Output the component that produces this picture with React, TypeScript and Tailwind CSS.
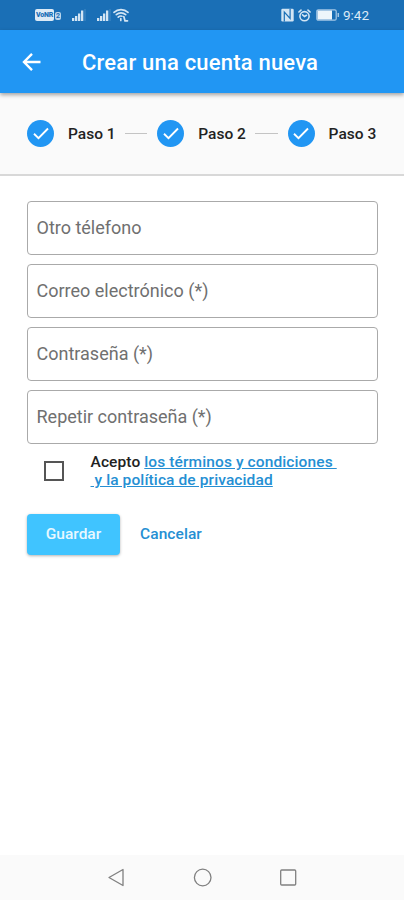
import { Fragment } from 'react'

const STEPS = ['Paso 1', 'Paso 2', 'Paso 3']
const FIELDS = ['Otro télefono', 'Correo electrónico (*)', 'Contraseña (*)', 'Repetir contraseña (*)']

function SignalIcon() {
  return (
    <svg width="16" height="14" viewBox="0 0 16 14" fill="#d3e5f4">
      <rect x="1" y="10" width="2.300" height="3" />
      <rect x="4" y="8" width="2.300" height="5" />
      <rect x="7" y="5.500" width="2.300" height="7.500" />
      <rect x="10" y="2.500" width="2.300" height="10.500" />
      <rect x="13.500" y="1" width="1" height="12" opacity="0.250" />
    </svg>
  )
}

function WifiIcon() {
  return (
    <svg width="16" height="14" viewBox="0 0 16 14" fill="none" stroke="#d3e5f4" strokeWidth="1.700" strokeLinecap="round">
      <path d="M1 4.300C4.800.6 11.200.6 15 4.300" />
      <path d="M3.300 6.700C6 4.200 10 4.200 12.700 6.700" />
      <path d="M5.200 9.200C6.500 8 7.800 7.800 9 8.200" />
      <path d="M7.800 12.500V10.500M10.800 8.500l1.200 4.300h2.500" />
    </svg>
  )
}

function NfcIcon() {
  return (
    <svg width="13" height="14" viewBox="0 0 13 14">
      <rect x="0.300" y="0.800" width="12.400" height="12.600" rx="1.200" fill="#d3e5f4" />
      <path d="M3.300 13.400V4l5.800 6.500V.8" fill="none" stroke="#1a6fb6" strokeWidth="1.200" />
    </svg>
  )
}

function AlarmIcon() {
  return (
    <svg width="13" height="13" viewBox="0 0 13 13" fill="none" stroke="#d3e5f4" strokeWidth="1.600" strokeLinecap="round">
      <circle cx="6.500" cy="7.200" r="4.600" />
      <path d="M.9 3L3 1.100M12.100 3L10 1.100M4.600 5.800l1.900 1.700 2-1.200" />
    </svg>
  )
}

function BatteryIcon() {
  return (
    <svg width="24" height="12" viewBox="0 0 24 12" fill="none">
      <rect x="0.800" y="0.800" width="19.400" height="10.400" rx="1.500" stroke="#a5c8e6" strokeWidth="1.200" />
      <rect x="1.500" y="1.500" width="14.500" height="9" fill="#edf5fb" />
      <path d="M22.300 4v4" stroke="#a5c8e6" strokeWidth="1.500" />
    </svg>
  )
}

function StatusBar() {
  return (
    <div className="flex h-[30px] items-center bg-[#1a6fb6] px-[35px] text-[#dceaf6]">
      <span className="flex h-[12px] w-[19px] items-center justify-center rounded-[2px] bg-[#dceaf6] text-[7px] font-black leading-none tracking-[-0.200px] text-[#1a6fb6]">
        VoNR
      </span>
      <span className="ml-px mt-0.5 flex h-[8px] w-[6px] items-center justify-center rounded-[2px] bg-[#bcd6ec] text-[7px] font-bold leading-none text-[#1a6fb6]">
        2
      </span>
      <div className="ml-[10px]"><SignalIcon /></div>
      <div className="ml-[9px]"><SignalIcon /></div>
      <div className="ml-px"><WifiIcon /></div>
      <div className="ml-auto flex items-center">
        <NfcIcon />
        <div className="ml-1"><AlarmIcon /></div>
        <div className="ml-[5px]"><BatteryIcon /></div>
        <span className="ml-[3px] mt-px text-[13.500px] leading-none">9:42</span>
      </div>
    </div>
  )
}

function AppBar() {
  return (
    <header className="relative z-10 flex h-[63px] items-center bg-[#2196f3] pl-[22px] text-white shadow-[0_2px_4px_rgba(0,0,0,0.350)]">
      <svg width="20" height="20" viewBox="0 0 20 20" fill="none" stroke="currentColor" strokeWidth="2.400">
        <path d="M18.500 10H3M10 1.800L2 10l8 8.200" />
      </svg>
      <h1 className="ml-[40px] mt-[3px] whitespace-nowrap text-[22px] font-medium leading-none tracking-[0.200px]">
        Crear una cuenta nueva
      </h1>
    </header>
  )
}

function Stepper() {
  return (
    <div className="flex h-[83px] items-center border-b-2 border-[#d8d8d8] bg-[#fafafa] pl-[27px]">
      {STEPS.map((step, i) => (
        <Fragment key={step}>
          {i > 0 && <span className="mx-[10px] h-px w-[22.300px] bg-[#c4c4c4]" />}
          <span className="flex size-[27px] items-center justify-center rounded-full bg-[#2196f3]">
            <svg width="16" height="13" viewBox="0 0 16 13" fill="none" stroke="white" strokeWidth="1.900">
              <path d="M1 6.800l4.500 4.300L15 1.500" />
            </svg>
          </span>
          <span className="ml-[14px] mt-[2px] w-[47px] whitespace-nowrap text-[15.500px] font-medium leading-none text-[#222]">
            {step}
          </span>
        </Fragment>
      ))}
    </div>
  )
}

function NavBar() {
  return (
    <nav className="flex h-[45px] items-center bg-[#fafafa] pl-[107px]">
      <svg width="18" height="20" viewBox="0 0 18 20" fill="none" stroke="#808080" strokeWidth="1.300" strokeLinejoin="round">
        <path d="M16 1.500v16L2 9.500z" />
      </svg>
      <svg className="ml-[68px]" width="20" height="20" viewBox="0 0 20 20" fill="none" stroke="#808080" strokeWidth="1.300">
        <circle cx="9.700" cy="9.500" r="8.300" />
      </svg>
      <svg className="ml-[66px]" width="18" height="18" viewBox="0 0 18 18" fill="none" stroke="#808080" strokeWidth="1.300">
        <rect x="1.700" y="1" width="15" height="15" rx="1" />
      </svg>
    </nav>
  )
}

export default function App() {
  return (
    <div className="flex h-[900px] w-[404px] flex-col overflow-hidden bg-white font-[Roboto,sans-serif]">
      <StatusBar />
      <AppBar />
      <Stepper />
      <main className="flex-1 px-[27px] pt-[25px]">
        <div className="flex w-[351px] flex-col gap-[9px]">
          {FIELDS.map(label => (
            <div
              key={label}
              className="flex h-[54px] items-center whitespace-nowrap rounded-[4px] border border-[#aaa] px-[8.500px] pb-[2px] text-[18px] text-[#707070]"
            >
              {label}
            </div>
          ))}
        </div>

        <div className="mt-[9px] flex items-start">
          <span className="ml-[17px] mt-[8px] size-5 border-2 border-[#555]" />
          <div className="ml-[26.500px] whitespace-pre text-[15.500px] font-medium leading-[18px] tracking-[0.110px] text-[#222]">
            <div className="flex">
              <span>Acepto </span>
              <span className="text-[#258fd3] underline">{'los términos y condiciones '}</span>
            </div>
            <div className="text-[#258fd3] underline">{' y la política de privacidad'}</div>
          </div>
        </div>

        <div className="mt-[25px] flex items-center text-[15.500px] font-medium">
          <button className="h-[41px] w-[93px] rounded-[4px] bg-[#40c4ff] text-[#e8f8ff] shadow-[0_1px_3px_rgba(0,0,0,0.300)]">
            Guardar
          </button>
          <button className="ml-[20px] tracking-[0.080px] text-[#258fd3]">Cancelar</button>
        </div>
      </main>
      <NavBar />
    </div>
  )
}
